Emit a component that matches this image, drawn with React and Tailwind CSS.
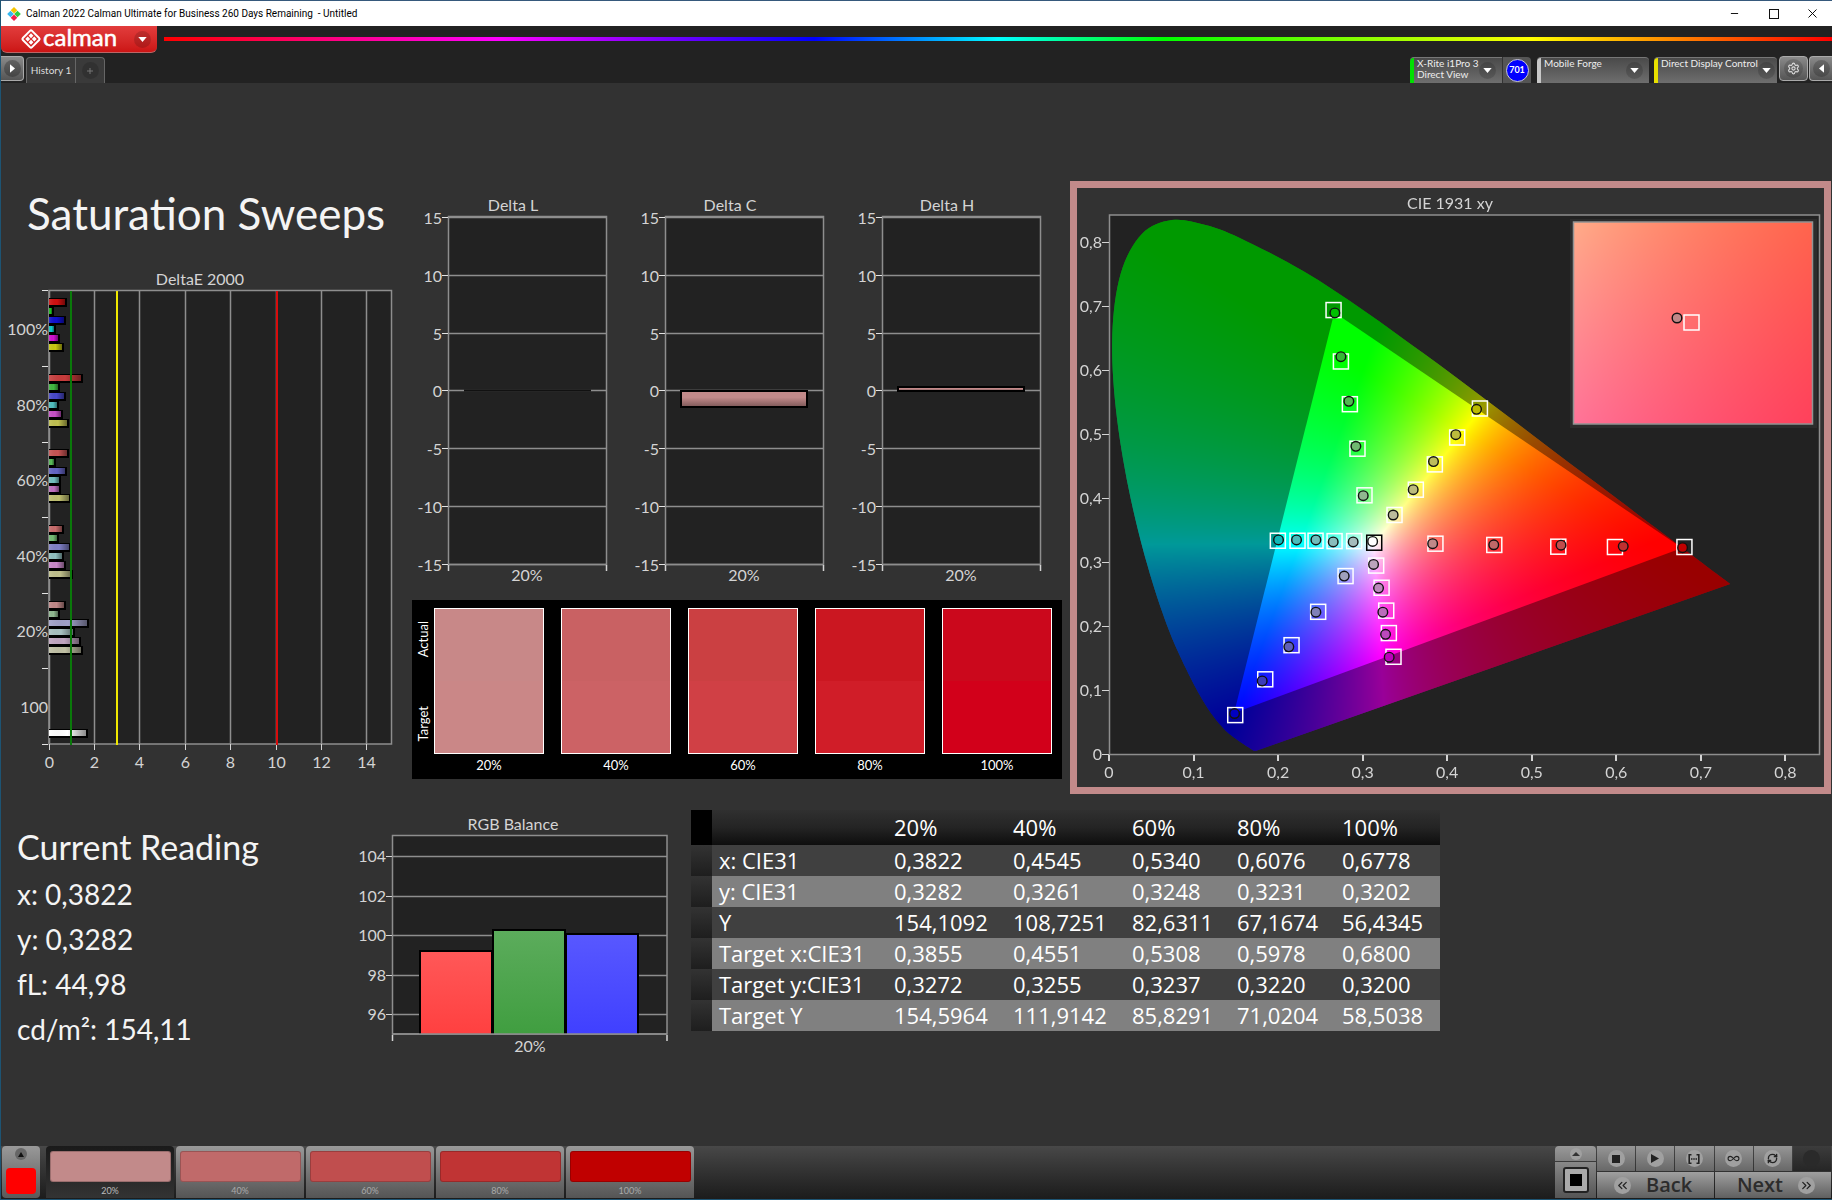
import React, { useLayoutEffect, useRef } from 'react';
import { Minus, X, Settings, RefreshCw, Infinity as Loop, ChevronsLeft, ChevronsRight } from 'lucide-react';

const levels = ['20%', '40%', '60%', '80%', '100%'];

const tableRows = [
  ['x: CIE31', '0,3822', '0,4545', '0,5340', '0,6076', '0,6778'],
  ['y: CIE31', '0,3282', '0,3261', '0,3248', '0,3231', '0,3202'],
  ['Y', '154,1092', '108,7251', '82,6311', '67,1674', '56,4345'],
  ['Target x:CIE31', '0,3855', '0,4551', '0,5308', '0,5978', '0,6800'],
  ['Target y:CIE31', '0,3272', '0,3255', '0,3237', '0,3220', '0,3200'],
  ['Target Y', '154,5964', '111,9142', '85,8291', '71,0204', '58,5038'],
];

const swatches = [
  { actual: '#c88888', target: '#ca8787' },
  { actual: '#c96163', target: '#cc6265' },
  { actual: '#cb4042', target: '#d04045' },
  { actual: '#cb1721', target: '#d01d28' },
  { actual: '#cb081c', target: '#d2001a' },
];

const deltaE = [
  { label: '100%', bars: [[17, '#d01010'], [4, '#20c020'], [16, '#1010d0'], [6, '#10c8c8'], [10, '#d010d0'], [14, '#c8c810']] },
  { label: '80%', bars: [[33, '#c83c3c'], [10, '#40b840'], [16, '#4848c8'], [9, '#50c0c0'], [13, '#c850c8'], [19, '#c0c050']] },
  { label: '60%', bars: [[19, '#c85454'], [6, '#58b858'], [17, '#6464c4'], [11, '#74c0c0'], [11, '#c070c0'], [21, '#c0c070']] },
  { label: '40%', bars: [[14, '#c86c6c'], [9, '#74bc74'], [21, '#8080c8'], [14, '#90c0c0'], [16, '#c888c8'], [23, '#c0c08c']] },
  { label: '20%', bars: [[16, '#c08888'], [10, '#90b890'], [39, '#a0a0c8'], [25, '#a8c0c0'], [31, '#c0a4c0'], [33, '#c0c0a4']] },
];

// [target x, target y, measured x, measured y, fill of the measured point]
const points = [
  [0.3855, 0.3292, 0.3822, 0.3292, '#c08888'],
  [0.4551, 0.3272, 0.4545, 0.3275, '#c06868'],
  [0.5308, 0.3245, 0.534, 0.3268, '#c04c4c'],
  [0.5978, 0.324, 0.6076, 0.325, '#c03030'],
  [0.68, 0.324, 0.6778, 0.323, '#c00000'],
  [0.265, 0.694, 0.2665, 0.6895, '#00c000'],
  [0.2737, 0.6137, 0.2737, 0.6212, '#34b834'],
  [0.2843, 0.547, 0.2831, 0.5515, '#50b850'],
  [0.2933, 0.4775, 0.2914, 0.4812, '#70b870'],
  [0.3016, 0.4047, 0.3001, 0.4041, '#90b890'],
  [0.1991, 0.3338, 0.1999, 0.335, '#10b8b8'],
  [0.2224, 0.3338, 0.2212, 0.335, '#48bcbc'],
  [0.2437, 0.3338, 0.2441, 0.335, '#70bcbc'],
  [0.2662, 0.3332, 0.2646, 0.3319, '#88bcbc'],
  [0.2894, 0.3332, 0.2882, 0.3319, '#a4bcbc'],
  [0.1487, 0.0615, 0.1479, 0.064, '#0000c0'],
  [0.1842, 0.1174, 0.1806, 0.1149, '#3c3cb8'],
  [0.2153, 0.1707, 0.2121, 0.1682, '#6060b8'],
  [0.2468, 0.2228, 0.2441, 0.2222, '#8080b8'],
  [0.2792, 0.2786, 0.2776, 0.2786, '#a0a0bc'],
  [0.3154, 0.295, 0.3123, 0.2968, '#bca4bc'],
  [0.3218, 0.2604, 0.3182, 0.2598, '#bc88bc'],
  [0.3273, 0.2247, 0.3233, 0.2222, '#bc6cbc'],
  [0.3304, 0.1896, 0.3265, 0.1877, '#bc48bc'],
  [0.3359, 0.1526, 0.3308, 0.1519, '#bc00bc'],
  [0.3371, 0.374, 0.3355, 0.374, '#bcbc9c'],
  [0.3623, 0.4135, 0.3592, 0.4135, '#bcbc7c'],
  [0.3848, 0.453, 0.3832, 0.4574, '#bcbc5c'],
  [0.4112, 0.495, 0.4096, 0.4994, '#bcbc3c'],
  [0.4381, 0.5403, 0.4341, 0.539, '#bcbc00'],
];

const locus = [
  [0.1741, 0.005], [0.1714, 0.0051], [0.1689, 0.0069], [0.1644, 0.0109], [0.1566, 0.0177],
  [0.144, 0.0297], [0.1355, 0.0399], [0.1241, 0.0578], [0.1096, 0.0868], [0.0913, 0.1327],
  [0.0687, 0.2007], [0.0454, 0.295], [0.0235, 0.4127], [0.0082, 0.5384], [0.0039, 0.6548],
  [0.0139, 0.7502], [0.0389, 0.812], [0.0743, 0.8338], [0.1142, 0.8262], [0.1547, 0.8059],
  [0.2296, 0.7543], [0.3016, 0.6923], [0.3731, 0.6245], [0.4441, 0.5547], [0.5125, 0.4866],
  [0.5752, 0.4242], [0.627, 0.3725], [0.6658, 0.334], [0.6915, 0.3083], [0.719, 0.2809], [0.7347, 0.2653],
];

const gamut = [[0.2665, 0.6895], [0.6778, 0.3215], [0.1479, 0.064]];

const CIE_W = 747;
const CIE_H = 599;
const inset = { x: 497, y: 34, w: 239, h: 202 };
const cx = (x) => 32 + x * 845.5;
const cy = (y) => 566 - y * 640.4;

// chromaticity to a full-brightness RGB triple
function xyToRgb(x, y) {
  const X = x / y;
  const Z = (1 - x - y) / y;
  const r = Math.max(0, 3.2406 * X - 1.5372 - 0.4986 * Z);
  const g = Math.max(0, -0.9689 * X + 1.8758 + 0.0415 * Z);
  const b = Math.max(0, 0.0557 * X - 0.204 + 1.057 * Z);
  const m = Math.max(r, g, b) || 1;
  return [(r / m) * 255, (g / m) * 255, (b / m) * 255];
}

function colorField(w, h, toXy) {
  const c = document.createElement('canvas');
  c.width = w;
  c.height = h;
  const ctx = c.getContext('2d');
  const img = ctx.createImageData(w, h);
  for (let j = 0; j < h; j++) {
    for (let i = 0; i < w; i++) {
      const [x, y] = toXy(i, j);
      const rgb = xyToRgb(x, Math.max(y, 0.001));
      const k = (j * w + i) * 4;
      img.data[k] = rgb[0];
      img.data[k + 1] = rgb[1];
      img.data[k + 2] = rgb[2];
      img.data[k + 3] = 255;
    }
  }
  ctx.putImageData(img, 0, 0);
  return c;
}

// smooth curve through every point of the spectral locus
function traceLocus(ctx) {
  const p = locus.map(([x, y]) => [cx(x), cy(y)]);
  ctx.beginPath();
  ctx.moveTo(p[0][0], p[0][1]);
  for (let i = 0; i < p.length - 1; i++) {
    const a = p[Math.max(i - 1, 0)];
    const b = p[i];
    const c = p[i + 1];
    const d = p[Math.min(i + 2, p.length - 1)];
    ctx.bezierCurveTo(
      b[0] + (c[0] - a[0]) / 6, b[1] + (c[1] - a[1]) / 6,
      c[0] - (d[0] - b[0]) / 6, c[1] - (d[1] - b[1]) / 6,
      c[0], c[1],
    );
  }
  ctx.closePath();
}

function drawCie(canvas) {
  const ctx = canvas.getContext('2d');
  ctx.clearRect(0, 0, CIE_W, CIE_H);
  ctx.fillStyle = '#222222';
  ctx.fillRect(32, 27, 711, 539);
  const field = colorField(CIE_W, CIE_H, (i, j) => [(i - 32) / 845.5, (566 - j) / 640.4]);

  ctx.save();
  traceLocus(ctx);
  ctx.clip();
  ctx.drawImage(field, 0, 0);
  ctx.fillStyle = 'rgba(0,0,0,0.4)';
  ctx.fillRect(0, 0, CIE_W, CIE_H);
  ctx.beginPath();
  gamut.forEach(([x, y]) => ctx.lineTo(cx(x), cy(y)));
  ctx.closePath();
  ctx.clip();
  ctx.drawImage(field, 0, 0);
  ctx.restore();

  const zoomed = colorField(inset.w, inset.h, (i, j) => [
    0.3855 + (i / inset.w - 0.5) * 0.054,
    0.3272 - (j / inset.h - 0.5) * 0.0456,
  ]);
  ctx.fillStyle = '#2c2c2c';
  ctx.fillRect(inset.x - 4, inset.y - 3, inset.w + 8, inset.h + 7);
  ctx.drawImage(zoomed, inset.x, inset.y);
}

function CieChart() {
  const ref = useRef(null);
  useLayoutEffect(() => {
    drawCie(ref.current);
  }, []);

  return (
    <section className="ml-2 mr-px flex-1 min-w-0 border-7 border-[#c28a8a]">
      <div className="relative">
        <canvas ref={ref} width={CIE_W} height={CIE_H} className="block w-full h-auto" />
        <svg viewBox="0 0 747 599" className="absolute inset-0 w-full h-full" fill="#d4d4d4" fontSize="16">
          <text x="373" y="21" textAnchor="middle">CIE 1931 xy</text>
          <rect x="32.5" y="27" width="710" height="539.500" fill="none" stroke="#8e8e8e" strokeWidth="1.500" />
          {[0, 1, 2, 3, 4, 5, 6, 7, 8].map((n) => (
            <g key={n}>
              <path d={`M${Math.round(cx(n / 10))} 567v6`} stroke="#d4d4d4" strokeWidth="2" />
              <text x={cx(n / 10)} y="590" textAnchor="middle">{n === 0 ? '0' : `0,${n}`}</text>
              <path d={`M25 ${Math.round(cy(n / 10)) + 0.5}h7`} stroke="#d4d4d4" />
              <text x="25" y={cy(n / 10) + 6} textAnchor="end">{n === 0 ? '0' : `0,${n}`}</text>
            </g>
          ))}
          {points.map(([tx, ty, mx, my, fill], i) => (
            <g key={i}>
              <rect x={cx(tx) - 7} y={cy(ty) - 7} width="15" height="15" fill="none" stroke="#fff" strokeWidth="1.5" />
              <circle cx={cx(mx) + 0.5} cy={cy(my) + 0.5} r="4.8" fill={fill} stroke="#111" strokeWidth="1.4" />
            </g>
          ))}
          <rect x={cx(0.3131) - 7} y={cy(0.3307) - 7} width="15" height="15" fill="none" stroke="#000" strokeWidth="1.5" />
          <circle cx={cx(0.3118)} cy={cy(0.3319)} r="4.8" fill="#fff" stroke="#111" strokeWidth="1.4" />
          <rect x={inset.x - 0.5} y={inset.y} width={inset.w} height={inset.h} fill="none" stroke="#939393" strokeWidth="1.5" />
          <rect x="607" y="127" width="15" height="15" fill="none" stroke="#fff" strokeWidth="1.5" />
          <circle cx="600" cy="130" r="4.8" fill="#c08888" stroke="#111" strokeWidth="1.4" />
        </svg>
      </div>
    </section>
  );
}

function DeltaEChart() {
  const x = (v) => Math.round(47.5 + v * 22.7) + 0.5;
  return (
    <svg viewBox="0 0 411 510" className="block w-full h-auto mt-[29px]" fill="#d4d4d4" fontSize="16">
      <defs>
        <linearGradient id="barShade">
          <stop offset="0" stopColor="#fff" stopOpacity="0.12" />
          <stop offset="0.5" stopColor="#000" stopOpacity="0" />
          <stop offset="1" stopColor="#000" stopOpacity="0.45" />
        </linearGradient>
      </defs>
      <text x="199" y="15" textAnchor="middle">DeltaE 2000</text>
      <rect x="48" y="20.5" width="342.500" height="453.500" fill="#222" stroke="#8e8e8e" strokeWidth="1.500" />
      {[0, 2, 4, 6, 8, 10, 12, 14].map((v) => (
        <g key={v}>
          <path d={`M${x(v)} 21V474`} stroke="#8e8e8e" strokeWidth="1.500" />
          <path d={`M${x(v)} 474v6`} stroke="#d4d4d4" />
          <text x={x(v)} y="498" textAnchor="middle">{v}</text>
        </g>
      ))}
      {[20, 96, 172, 247, 323, 398, 474].map((y) => (
        <path key={y} d={`M41 ${y + 0.5}h6`} stroke="#e4e4e4" />
      ))}
      {deltaE.map((group, g) => (
        <g key={group.label}>
          <text x="47" y={Math.round(65 + g * 75.5)} textAnchor="end">{group.label}</text>
          {group.bars.map(([w, color], i) => {
            const y = Math.round(28 + g * 75.7 + i * 9);
            return (
              <g key={i}>
                <rect x="48" y={y} width={w + 1} height="9" fill="#000" />
                <rect x="48" y={y + 1} width={w - 1} height="6" fill={color} />
                <rect x="48" y={y + 1} width={w - 1} height="6" fill="url(#barShade)" />
              </g>
            );
          })}
        </g>
      ))}
      <text x="47" y="443" textAnchor="end">100</text>
      <rect x="48" y="459" width="39" height="9" fill="#000" />
      <rect x="48" y="460" width="37" height="6" fill="#fff" />
      <rect x="48" y="460" width="37" height="6" fill="url(#barShade)" />
      <path d="M70 21V475" stroke="#0a7a0a" strokeWidth="2" />
      <path d="M116 21V475" stroke="#f0e800" strokeWidth="2" />
      <path d="M276 21V475" stroke="#d80c0c" strokeWidth="2" />
    </svg>
  );
}

function DeltaChart({ title, top, height }) {
  return (
    <svg viewBox="0 0 216 400" className="block w-[216px] h-auto" fill="#d4d4d4" fontSize="16">
      <defs>
        <linearGradient id="pinkBar" x2="0" y2="1">
          <stop offset="0.4" stopColor="#c28a8a" />
          <stop offset="1" stopColor="#7c5757" />
        </linearGradient>
      </defs>
      <text x="101" y="21" textAnchor="middle">{title}</text>
      <rect x="36.5" y="26.5" width="158" height="348" fill="#222" stroke="#8e8e8e" strokeWidth="1.500" />
      <path d="M37 27h158" stroke="#8e8e8e" strokeWidth="2" />
      {[15, 10, 5, 0, -5, -10, -15].map((v, i) => {
        const y = 28 + Math.round(i * 57.8);
        return (
          <g key={v}>
            <path d={`M36 ${y - 0.5}h159`} stroke="#8e8e8e" strokeWidth="1.500" />
            <path d={`M30 ${y - 0.5}h6`} stroke="#e4e4e4" />
            <text x="30" y={y + 6} textAnchor="end">{v}</text>
          </g>
        );
      })}
      <path d="M36.5 375v6M194.500 375v6" stroke="#d4d4d4" strokeWidth="1.500" />
      {height > 2 ? (
        <rect x="52" y={top} width="126" height={height} fill="url(#pinkBar)" stroke="#000" strokeWidth="2" />
      ) : (
        <path d="M52 200.500h127" stroke="#111" strokeWidth="2" />
      )}
      <text x="115" y="391" textAnchor="middle">20%</text>
    </svg>
  );
}

function Swatches() {
  return (
    <div className="mt-[10px] flex w-full bg-black text-white text-[13px] leading-4 pt-2 pb-[6px]">
      <div className="flex flex-col justify-between py-[13px] w-[22px] h-[146px] items-center">
        <span className="[writing-mode:vertical-rl] rotate-180">Actual</span>
        <span className="[writing-mode:vertical-rl] rotate-180">Target</span>
      </div>
      <div className="flex flex-1 gap-[17px] pr-[10px]">
        {swatches.map((s, i) => (
          <div key={levels[i]} className="flex-1 text-center">
            <div className="h-[146px] border border-white mb-[3px]">
              <div className="h-1/2" style={{ background: s.actual }} />
              <div className="h-1/2" style={{ background: s.target }} />
            </div>
            {levels[i]}
          </div>
        ))}
      </div>
    </div>
  );
}

function RgbBalance() {
  const bars = [
    { x: 69, y: 141, from: '#ff5858', to: '#ff4040', id: 'balR' },
    { x: 142, y: 120, from: '#5cac5c', to: '#409e40', id: 'balG' },
    { x: 215, y: 124, from: '#5858ff', to: '#4040ff', id: 'balB' },
  ];
  return (
    <svg viewBox="0 0 330 250" className="block w-[330px] h-[250px] mt-4 shrink-0" fill="#d4d4d4" fontSize="16">
      <text x="162" y="20" textAnchor="middle">RGB Balance</text>
      <rect x="41.5" y="25.5" width="274.500" height="198.500" fill="#222" stroke="#8e8e8e" strokeWidth="1.500" />
      {[104, 102, 100, 98, 96].map((v, i) => {
        const y = 46.5 + Math.round(i * 39.6);
        return (
          <g key={v}>
            <path d={`M41 ${y}h275`} stroke="#8e8e8e" strokeWidth="1.500" />
            <path d={`M35 ${y}h6`} stroke="#d4d4d4" />
            <text x="35" y={y + 5} textAnchor="end">{v}</text>
          </g>
        );
      })}
      {bars.map((b) => (
        <g key={b.id}>
          <linearGradient id={b.id} x2="0" y2="1">
            <stop offset="0" stopColor={b.from} />
            <stop offset="1" stopColor={b.to} />
          </linearGradient>
          <path d={`M${b.x} 224V${b.y}h72V224`} fill={`url(#${b.id})`} stroke="#000" strokeWidth="2" />
        </g>
      ))}
      <path d="M41 224h275" stroke="#8e8e8e" strokeWidth="1.500" />
      <path d="M41.5 225v6M316 225v6" stroke="#d4d4d4" strokeWidth="1.500" />
      <text x="179" y="242" textAnchor="middle">20%</text>
    </svg>
  );
}

function ResultsTable() {
  return (
    <table className="mt-4 ml-[10px] w-[749px] table-fixed border-collapse text-left text-white text-[22px] leading-[31px] font-['Open_Sans','Noto_Sans',sans-serif]">
      <colgroup>
        <col className="w-[21px]" />
        <col className="w-[175px]" />
        <col className="w-[119px]" />
        <col className="w-[119px]" />
        <col className="w-[105px]" />
        <col className="w-[105px]" />
        <col className="w-[105px]" />
      </colgroup>
      <thead>
        <tr className="h-[35px] bg-linear-to-b from-[#303030] from-0% via-[#242424] via-50% to-[#0e0e0e] to-100%">
          <td className="bg-black" />
          <td />
          {levels.map((l) => (
            <th key={l} scope="col" className="p-0 pl-[7px] font-normal">{l}</th>
          ))}
        </tr>
      </thead>
      <tbody>
        {tableRows.map(([name, ...cells], i) => (
          <tr key={name} className={i % 2 ? 'h-[31px] bg-[#808080]' : 'h-[31px] bg-[#404040]'}>
            <td className="bg-linear-to-b from-[#333] to-[#1e1e1e]" />
            <th scope="row" className="p-0 pl-[7px] font-normal whitespace-nowrap">{name}</th>
            {cells.map((c) => (
              <td key={c} className="p-0 pl-[7px]">{c}</td>
            ))}
          </tr>
        ))}
      </tbody>
    </table>
  );
}

function Caret({ className }) {
  return (
    <span className={`flex items-center justify-center rounded-full bg-black/15 size-[17px] ${className || ''}`}>
      <svg viewBox="0 0 10 6" className="w-[9px] h-[5px]"><path d="M0 0h10L5 6z" fill="#fff" /></svg>
    </span>
  );
}

function SourceButton({ color, name, mode, className }) {
  return (
    <button className={`flex text-left text-[#eee] text-[10px] leading-[11px] bg-linear-to-b from-[#4a4a4a] to-[#6e6e6e] rounded-t border-t border-[#777] h-[26px] ${className}`}>
      <span className="w-1 h-full rounded-tl shrink-0" style={{ background: color }} />
      <span className="pl-[3px] flex-1 whitespace-nowrap">{name}<br />{mode}</span>
      <Caret className="mt-1 shrink-0" />
    </button>
  );
}

function Header() {
  return (
    <header>
      <div className="h-[26px] bg-white flex items-center border-t border-[#36597c] text-black">
        <svg viewBox="0 0 14 14" className="size-[14px] ml-[6px]">
          <path d="M7 0l3.300 3.300L7 6.600 3.700 3.300z" fill="#f5c400" />
          <path d="M3.500 3.700L6.800 7l-3.300 3.300L.2 7z" fill="#35b8f0" />
          <path d="M10.500 3.700L13.800 7l-3.300 3.300L7.200 7z" fill="#2ecc40" />
          <path d="M7 7.400l3.300 3.300L7 14l-3.300-3.300z" fill="#f0204c" />
        </svg>
        <span className="ml-[5px] text-[10px] font-['Roboto','Noto_Sans',sans-serif] whitespace-pre">Calman 2022 Calman Ultimate for Business 260 Days Remaining  - Untitled</span>
        <div className="ml-auto flex">
          <button aria-label="Minimize" className="w-[39px] flex justify-center items-center"><Minus size={11} strokeWidth={2} /></button>
          <button aria-label="Maximize" className="w-[39px] flex justify-center items-center">
            <svg viewBox="0 0 10 10" className="size-[10px]"><rect x=".5" y=".5" width="9" height="9" fill="none" stroke="#111" /></svg>
          </button>
          <button aria-label="Close" className="w-[39px] flex justify-center items-center"><X size={15} strokeWidth={1.500} /></button>
        </div>
      </div>
      <div className="bg-[#222] h-[57px] flex flex-col justify-between">
        <div className="flex items-start">
          <button className="w-[156px] h-[27px] flex items-center rounded-b-md border-b border-[#b66] bg-linear-to-b from-[#e23c3c] to-[#cc1414] pl-[19px] pr-[6px] text-white">
            <svg viewBox="0 0 22 22" className="size-[22px]">
              <g transform="rotate(45 11 11)" fill="none" stroke="#fff">
                <rect x="4.500" y="4.500" width="13" height="13" rx="1.500" strokeWidth="2" />
                <rect x="7" y="7" width="3.400" height="3.400" fill="#fff" stroke="none" />
                <rect x="11.600" y="7" width="3.400" height="3.400" fill="#fff" stroke="none" />
                <rect x="7" y="11.600" width="3.400" height="3.400" fill="#fff" stroke="none" />
                <rect x="11.600" y="11.600" width="3.400" height="3.400" fill="#fff" stroke="none" />
              </g>
            </svg>
            <span className="text-[24px] leading-6 pb-1 ml-px [-webkit-text-stroke:0.500px_#fff]">calman</span>
            <Caret className="ml-auto" />
          </button>
          <div className="flex-1 h-1 mt-[11px] ml-[7px] bg-[linear-gradient(90deg,#f00,#f0f_20%,#00f_39%,#0ff_50%,#0f0_60%,#ff0_82%,#f00)]" />
        </div>
        <div className="flex items-end text-[#ddd]">
          <button aria-label="Open panel" className="w-[23px] h-[25px] mb-[2px] rounded-r border border-l-0 border-[#aaa] bg-linear-to-b from-[#8a8a8a] to-[#555] flex items-center justify-center">
            <span className="size-[17px] rounded-full bg-black/25 flex items-center justify-center">
              <svg viewBox="0 0 6 10" className="w-[5px] h-[9px]"><path d="M0 0l6 5-6 5z" fill="#fff" /></svg>
            </span>
          </button>
          <button className="ml-[2px] h-[26px] w-[50px] text-[10px] rounded-tl border border-b-0 border-[#666] bg-[#3a3a3a] whitespace-nowrap">History 1</button>
          <button aria-label="Add history" className="h-[26px] w-[29px] rounded-tr border border-b-0 border-l-0 border-[#666] bg-[#3a3a3a] text-[#777] flex items-center justify-center">
            <span className="size-[17px] rounded-full bg-black/15 flex items-center justify-center">
              <svg viewBox="0 0 6 6" className="size-[6px]"><path d="M3 0v6M0 3h6" stroke="#777" /></svg>
            </span>
          </button>
          <div className="ml-auto flex items-end">
            <SourceButton color="#00e000" name="X-Rite i1Pro 3" mode="Direct View" className="w-[92px] pr-[9px] rounded-tr-none" />
            <span className="w-[29px] h-[26px] bg-[#555] border-l border-[#333] rounded-tr flex items-center justify-center">
              <span className="size-[23px] rounded-full bg-[#0000ff] border border-[#ccc] text-white text-[9px] font-bold flex items-center justify-center">701</span>
            </span>
            <SourceButton color="#c8c8c8" name="Mobile Forge" className="ml-[6px] w-[112px] pr-[6px]" />
            <SourceButton color="#e8e000" name="Direct Display Control" className="ml-[5px] w-[123px] pr-[5px]" />
            <button aria-label="Settings" className="ml-[2px] mb-[2px] w-[29px] h-[25px] rounded border border-[#aaa] bg-linear-to-b from-[#8a8a8a] to-[#555] flex items-center justify-center">
              <span className="size-[19px] rounded-full bg-black/15 flex items-center justify-center"><Settings size={13} /></span>
            </button>
            <button aria-label="Collapse panel" className="ml-px mb-[2px] w-[23px] h-[25px] rounded-l border border-r-0 border-[#aaa] bg-linear-to-b from-[#8a8a8a] to-[#555] flex items-center justify-center">
              <span className="size-[17px] rounded-full bg-black/20 flex items-center justify-center">
                <svg viewBox="0 0 6 10" className="w-[5px] h-[9px]"><path d="M6 0L0 5l6 5z" fill="#fff" /></svg>
              </span>
            </button>
          </div>
        </div>
      </div>
    </header>
  );
}

const steps = [
  { label: '20%', color: '#c28a8a' },
  { label: '40%', color: '#c06a6a' },
  { label: '60%', color: '#c04e4e' },
  { label: '80%', color: '#c03434' },
  { label: '100%', color: '#c00000' },
];

function RoundIcon({ children, className }) {
  return <span className={`rounded-full bg-[#a0a0a0] flex items-center justify-center text-[#222] ${className}`}>{children}</span>;
}

function Footer() {
  const tool = 'h-[25px] flex-1 bg-linear-to-b from-[#969696] to-[#686868] flex items-center justify-center';
  return (
    <footer className="h-[53px] flex pb-px bg-linear-to-b from-[#484848] to-[#1c1c1c]">
      <button aria-label="Selected color" className="ml-px w-[38px] h-[52px] rounded bg-linear-to-b from-[#999] to-[#5a5a5a] flex flex-col items-center justify-between pt-[2px] pb-1">
        <span className="size-3 rounded-full bg-[#666] flex items-center justify-center">
          <svg viewBox="0 0 6 5" className="w-[6px] h-[5px]"><path d="M3 0l3 5H0z" fill="#111" /></svg>
        </span>
        <span className="w-[30px] h-[26px] rounded-sm bg-[#ff0000]" />
      </button>
      <div className="flex gap-[2px] ml-[6px]">
        {steps.map((s, i) => (
          <button key={s.label} className={`w-[128px] h-[52px] rounded-t pt-1 text-[9px] leading-3 ${i === 0 ? 'bg-linear-to-b from-[#1a1a1a] to-[#333] text-[#bbb]' : 'bg-linear-to-b from-[#999] to-[#555] text-[#aaa]'}`}>
            <span className="block mx-auto w-[121px] h-[31px] rounded-[3px] border border-black/20 mb-[3px]" style={{ background: s.color }} />
            {s.label}
          </button>
        ))}
      </div>
      <div className="ml-auto w-[41px] flex flex-col gap-px">
        <button aria-label="Expand" className="h-[15px] rounded-t bg-linear-to-b from-[#999] to-[#808080] flex items-center justify-center">
          <RoundIcon className="size-3"><svg viewBox="0 0 8 4" className="w-2 h-1"><path d="M4 0l4 4H0z" fill="#333" /></svg></RoundIcon>
        </button>
        <button aria-label="Pattern window" className="flex-1 bg-linear-to-b from-[#888] to-[#555] flex items-center justify-center">
          <span className="size-[26px] rounded-[3px] border-2 border-[#222] bg-[#aaa] flex items-center justify-center"><span className="size-3 bg-black" /></span>
        </button>
      </div>
      <div className="ml-px w-[234px] mr-px flex flex-col gap-px">
        <div className="flex gap-px">
          <button aria-label="Stop" className={tool}><RoundIcon className="size-[17px]"><span className="size-2 bg-[#222]" /></RoundIcon></button>
          <button aria-label="Read" className={tool}><RoundIcon className="size-[17px]"><svg viewBox="0 0 8 9" className="w-2 h-[9px]"><path d="M0 0l8 4.500L0 9z" fill="#222" /></svg></RoundIcon></button>
          <button aria-label="Read series" className={tool}>
            <RoundIcon className="size-[17px]">
              <svg viewBox="0 0 12 10" className="w-3 h-[10px]" fill="none" stroke="#222" strokeWidth="1.600">
                <path d="M3.500 .8H1.200v8.400h2.300M8.500 .8h2.300v8.400H8.500" />
                <path d="M3 5h6" strokeDasharray="1.500 .75" />
              </svg>
            </RoundIcon>
          </button>
          <button aria-label="Continuous" className={tool}><RoundIcon className="size-[17px]"><Loop size={13} /></RoundIcon></button>
          <button aria-label="Refresh" className={tool}><RoundIcon className="size-[17px]"><RefreshCw size={11} strokeWidth={3} /></RoundIcon></button>
          <span className="h-[25px] flex-1 bg-linear-to-b from-[#3c3c3c] to-[#262626] flex items-center justify-center"><span className="size-[17px] rounded-full bg-[#2a2a2a]" /></span>
        </div>
        <div className="flex gap-px flex-1 text-[#2c2c2c] text-xl leading-6 font-semibold font-['Open_Sans','Noto_Sans',sans-serif]">
          <button className="flex-1 bg-linear-to-b from-[#a0a0a0] to-[#606060] flex items-center pl-[17px] gap-[15px]">
            <RoundIcon className="size-[17px]"><ChevronsLeft size={15} /></RoundIcon>Back
          </button>
          <button className="flex-1 bg-linear-to-b from-[#a0a0a0] to-[#606060] flex items-center justify-end pr-4 gap-[15px]">
            Next<RoundIcon className="size-[17px]"><ChevronsRight size={15} /></RoundIcon>
          </button>
        </div>
      </div>
    </footer>
  );
}

function App() {
  return (
    <div className="min-h-screen flex flex-col bg-[#323232] border-l border-b border-[#1d5473] font-['Lato','Open_Sans',sans-serif]">
      <Header />
      <main className="flex-1 pt-[98px]">
        <div className="flex items-start">
          <section className="w-[411px] shrink-0">
            <h1 className="mt-1 pl-[26px] text-[#f4f4f4] text-[44px] leading-[56px] whitespace-nowrap">Saturation Sweeps</h1>
            <DeltaEChart />
          </section>
          <section className="w-[650px] shrink-0 pt-[9px]">
            <div className="flex gap-px">
              <DeltaChart title="Delta L" top={201} height={1} />
              <DeltaChart title="Delta C" top={201} height={16} />
              <DeltaChart title="Delta H" top={197} height={4} />
            </div>
            <Swatches />
          </section>
          <CieChart />
        </div>
        <div className="flex items-start">
          <section className="w-[350px] shrink-0 pl-4 pt-7 text-[#f4f4f4] text-[28px] leading-[45px]">
            <h2 className="text-[34px] leading-[50px]">Current Reading</h2>
            <p>x: 0,3822</p>
            <p>y: 0,3282</p>
            <p>fL: 44,98</p>
            <p>cd/m²: 154,11</p>
          </section>
          <RgbBalance />
          <ResultsTable />
        </div>
      </main>
      <Footer />
    </div>
  );
}

export default App;
